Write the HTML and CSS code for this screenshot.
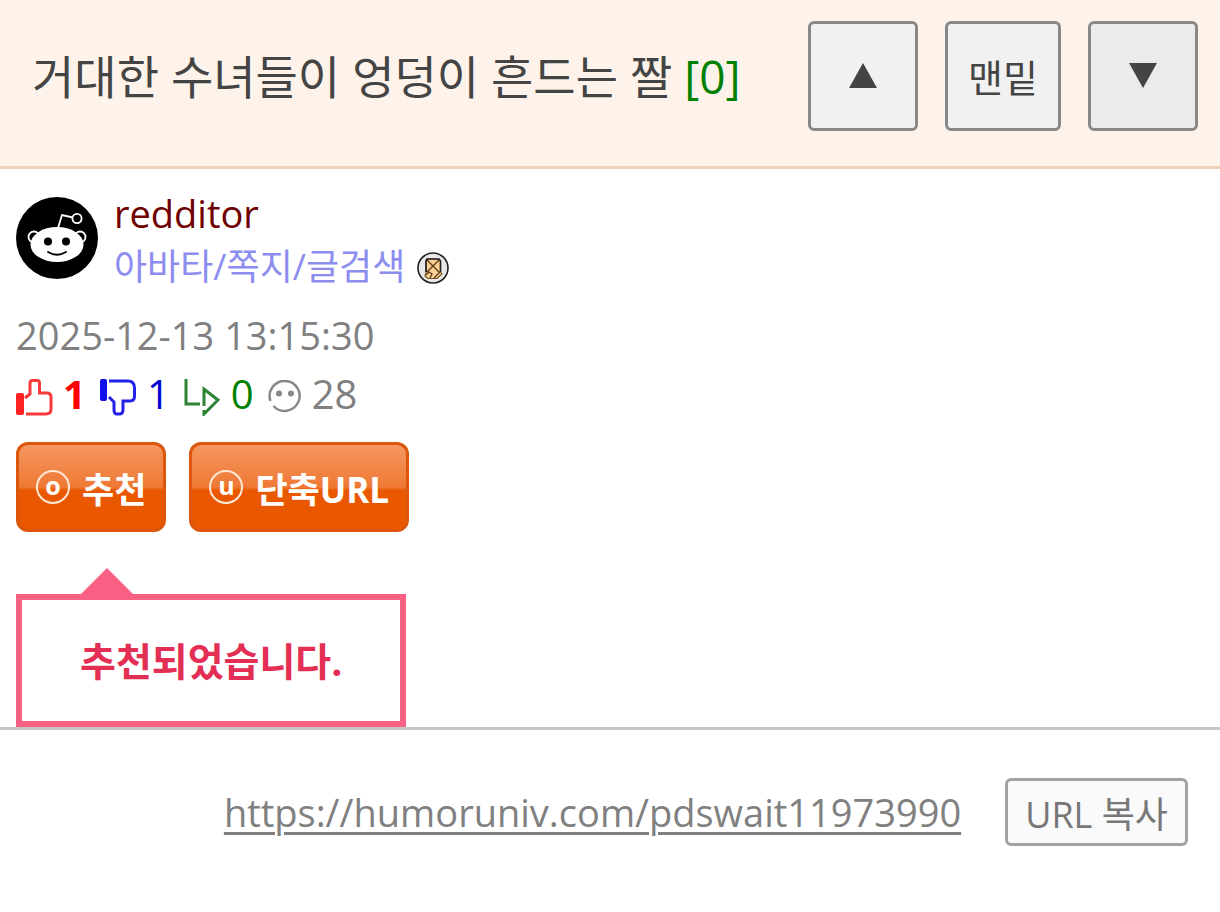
FILE: index.html
```
<!DOCTYPE html>
<html lang="ko">
<head>
	<meta charset="utf-8">
	<meta name="viewport" content="width=device-width, initial-scale=1">
	<title>거대한 수녀들이 엉덩이 흔드는 짤</title>
	<link rel="stylesheet" href="styles.css">
</head>
<body>
<header class="top">
	<h1 class="title">거대한 수녀들이 엉덩이 흔드는 짤 <span class="cnt">[0]</span></h1>
	<nav class="move">
		<button type="button" class="move_btn" aria-label="위로"><svg width="28" height="25" viewBox="0 0 28 25"><path d="M14 0L28 25H0z"/></svg></button>
		<button type="button" class="move_btn">맨밑</button>
		<button type="button" class="move_btn down" aria-label="아래로"><svg width="28" height="25" viewBox="0 0 28 25"><path d="M0 0H28L14 25z"/></svg></button>
	</nav>
</header>
<main>
	<section class="info">
		<div class="writer">
			<svg class="avatar" width="82" height="82" viewBox="0 0 82 82">
				<circle cx="41" cy="41" r="41" fill="#000"/>
				<g fill="#000" stroke="#fff" stroke-width="1.8">
					<circle cx="18" cy="40" r="5.5"/>
					<circle cx="64" cy="40" r="5.5"/>
					<path d="M42 31L46 18L57 20.500" fill="none"/>
					<circle cx="61" cy="21.500" r="4.6"/>
				</g>
				<ellipse cx="41" cy="47.500" rx="26.5" ry="17.5" fill="#fff"/>
				<circle cx="32" cy="44.500" r="4"/>
				<circle cx="50" cy="44.500" r="4"/>
				<path d="M32 55Q41 60.500 50 55" fill="none" stroke="#000" stroke-width="1.8" stroke-linecap="round"/>
			</svg>
			<div class="writer_txt">
				<span class="nick">redditor</span>
				<div class="links">
					<a href="#">아바타/쪽지/글검색</a>
					<svg width="34" height="34" viewBox="0 0 34 34">
						<circle cx="17" cy="17" r="15" fill="#e8e8e8" stroke="#222" stroke-width="1.6"/>
						<path d="M11 8H23L24.500 10V21L26 23L21 27.500H12L9 25L10 22V10z" fill="#fdcf92" stroke="#7a5020" stroke-width="1.2"/>
						<path d="M11 9L17 15L23 9M17 15L11 21M17 15L23 21M10 24L13 21L16 23L14 27M18 27L24 21" fill="none" stroke="#5a3a1a" stroke-width="1.3"/>
						<path d="M10 21V10L11 8H23L24.500 10V21" fill="none" stroke="#222" stroke-width="1.6"/>
					</svg>
				</div>
			</div>
		</div>
		<time class="date" datetime="2025-12-13T13:15:30">2025-12-13 13:15:30</time>
		<ul class="stats">
			<li class="ok">
				<svg width="37" height="37" viewBox="0 0 37 37" fill="none" stroke="#f53a3a" stroke-width="3">
					<rect x="1" y="15" width="6" height="20" rx="1" fill="#f22" stroke="#f22" stroke-width="2"/>
					<path d="M9 19L14 15V4Q14 1.500 17 1.500H21Q23.500 1.500 23.500 4V14H31Q35 14 35 18V30Q35 35 30 35H10"/>
				</svg>
				<b>1</b>
			</li>
			<li class="not">
				<svg width="37" height="37" viewBox="0 0 37 37" fill="none" stroke="#2222e8" stroke-width="3">
					<rect x="1" y="1" width="5" height="20" rx="1" fill="#11e" stroke="#11e" stroke-width="2"/>
					<path d="M9 2H28Q34.500 2 34.500 9V17Q34.500 22 30 22H23V31Q23 35 19 35H17Q14 35 14 31V23L9 18"/>
				</svg>
				1
			</li>
			<li class="reply">
				<svg width="37" height="37" viewBox="0 0 37 37" fill="none" stroke="#2c8434" stroke-width="3">
					<path d="M2 0V25H16"/>
					<path d="M20 27V10L34 21L20 35V31"/>
				</svg>
				0
			</li>
			<li class="view">
				<svg width="34" height="34" viewBox="0 0 34 34">
					<path d="M2.500 21A15 15 0 1 1 5.500 26" fill="none" stroke="#888" stroke-width="2.500"/>
					<circle cx="11" cy="13.500" r="3" fill="#888"/>
					<circle cx="23" cy="13.500" r="3" fill="#888"/>
				</svg>
				28
			</li>
		</ul>
		<div class="btns">
			<button type="button" class="btn"><i>o</i>추천</button>
			<button type="button" class="btn"><i>u</i>단축URL</button>
		</div>
		<div class="tip" role="status">추천되었습니다.</div>
	</section>
	<section class="url">
		<a href="https://humoruniv.com/pdswait11973990">https://humoruniv.com/pdswait11973990</a>
		<button type="button" class="copy">URL 복사</button>
	</section>
</main>
</body>
</html>
```
FILE: styles.css
```
* {
	box-sizing: border-box;
}
body {
	margin: 0;
	background: #fff;
	color: #444;
	font-family: "Open Sans", "Noto Sans CJK KR", sans-serif;
	font-size: 40px;
}
button {
	margin: 0;
	font-family: inherit;
	cursor: pointer;
}
svg {
	display: block;
	flex: none;
}
.top {
	display: flex;
	justify-content: space-between;
	align-items: flex-start;
	padding: 21px 22px 35px 32px;
	background: #fdf3ea;
	border-bottom: 3px solid #efd0b8;
}
.title {
	margin: 0;
	font-size: 46px;
	font-weight: 400;
	line-height: 110px;
}
.cnt {
	color: #008000;
	font-weight: 500;
}
.move {
	display: flex;
	gap: 27px;
}
.move_btn {
	display: flex;
	align-items: center;
	justify-content: center;
	min-width: 110px;
	height: 110px;
	padding: 0 20px 2px;
	border: 3px solid #888;
	border-radius: 6px;
	background: #f1f1f1;
	color: #444;
	font-size: 38px;
}
.move_btn svg {
	fill: #444;
}
.down {
	background: #ebebeb;
}
.info {
	padding: 18px 16px 0;
	border-bottom: 3px solid #c6c6c6;
}
.writer {
	display: flex;
	gap: 16px;
}
.avatar {
	margin-top: 10px;
}
.nick {
	display: block;
	color: #700000;
	font-size: 38px;
	line-height: 52px;
}
.links {
	display: flex;
	align-items: center;
	gap: 11px;
	font-size: 36px;
	line-height: 56px;
}
.links svg {
	margin-top: 2px;
}
.links a {
	color: #8d8df0;
	text-decoration: none;
}
.date {
	display: block;
	margin-top: 11px;
	color: #808080;
	font-size: 38px;
	line-height: 58px;
}
.stats {
	display: flex;
	gap: 14px;
	margin: 0;
	padding: 0;
	list-style: none;
	line-height: 60px;
}
.stats li {
	display: flex;
	align-items: center;
	gap: 10px;
}
.stats svg {
	margin-top: 6px;
}
.ok {
	color: #f00;
}
.not {
	color: #00c;
}
.reply {
	color: #008000;
}
.view {
	color: #808080;
}
.btns {
	display: flex;
	gap: 23px;
	margin-top: 18px;
}
.btn {
	display: flex;
	align-items: center;
	gap: 12px;
	height: 90px;
	padding: 0 17px;
	border: 3px solid #dc560c;
	border-radius: 12px;
	background: linear-gradient(#f4965f, #ef7935 50%, #e95800 54%, #e95800);
	color: #fff;
	font-size: 35px;
	font-weight: 700;
}
.btn i {
	width: 34px;
	height: 34px;
	border: 2px solid #ffe9d6;
	border-radius: 50%;
	font-size: 25px;
	font-style: normal;
	line-height: 26px;
}
.tip {
	position: relative;
	width: fit-content;
	margin-top: 62px;
	padding: 30px 58px;
	border: 6px solid #fa6083;
	color: #e42f55;
	font-size: 39px;
	font-weight: 700;
	line-height: 61px;
}
.tip:before {
	content: "";
	position: absolute;
	left: 59px;
	bottom: 100%;
	margin-bottom: 6px;
	border: 26px solid transparent;
	border-top: 0;
	border-bottom-color: #fa6083;
}
.url {
	display: flex;
	align-items: center;
	justify-content: flex-end;
	gap: 44px;
	padding: 48px 32px;
	color: #808080;
}
.url a {
	color: #808080;
	font-size: 38px;
	text-underline-offset: 5px;
	text-decoration-thickness: 3px;
}
.copy {
	height: 68px;
	padding: 0 17px;
	border: 3px solid #a3a3a6;
	border-radius: 6px;
	background: #fafafa;
	color: #777;
	font-size: 36px;
}
```
